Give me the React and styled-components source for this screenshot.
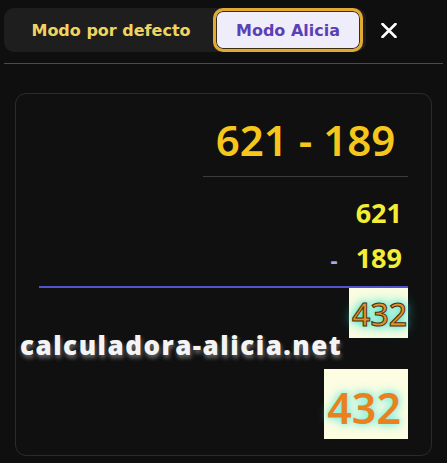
import React from "react";
import styled, { createGlobalStyle } from "styled-components";

const Global = createGlobalStyle`
  html, body { margin: 0; padding: 0; background: #0f0f0f; }
  body { font-family: "Noto Sans", sans-serif; }
`;

const Page = styled.div`
  width: 447px;
  height: 463px;
  background: #0f0f0f;
  padding-top: 8px;
  box-sizing: border-box;
  overflow: hidden;
`;

const Header = styled.div`
  display: flex;
  align-items: center;
  margin: 0 4px;
  height: 44px;
`;

const TabGroup = styled.div`
  display: flex;
  align-items: stretch;
  width: 362px;
  height: 44px;
  background: #1e1e1e;
  border-radius: 10px;
  padding-right: 3px;
  box-sizing: border-box;
`;

const Tab = styled.button`
  font-family: "DejaVu Sans", Verdana, sans-serif;
  font-weight: bold;
  font-size: 16px;
  border-radius: 10px;
  cursor: pointer;
  display: flex;
  align-items: center;
  justify-content: center;
  padding: 0;
  ${(p) =>
    p.$active
      ? `
    width: 150px;
    flex: none;
    background: #efedf9;
    color: #5b3fb5;
    border: 3px solid #e2aa33;
    box-shadow: inset 0 0 0 1px #3b2c12;
  `
      : `
    flex: 1;
    background: transparent;
    color: #f0d462;
    border: none;
    padding-left: 5px;
  `}
`;

const CloseButton = styled.button`
  background: transparent;
  border: none;
  padding: 0;
  margin-left: 14px;
  width: 17px;
  height: 17px;
  display: flex;
  align-items: center;
  justify-content: center;
  cursor: pointer;
`;

const Divider = styled.div`
  margin: 11px 4px 0 4px;
  height: 1px;
  background: #4c4c4c;
`;

const Card = styled.div`
  margin: 29px 0 0 15px;
  width: 417px;
  height: 363px;
  box-sizing: border-box;
  border: 1px solid #2b2b2b;
  border-radius: 11px;
  background: #101010;
  padding: 26px 23px 0 23px;
  display: flex;
  flex-direction: column;
  align-items: flex-end;
`;

const Title = styled.div`
  width: 205px;
  height: 40px;
  text-align: center;
  font-family: "Noto Sans", sans-serif;
  font-weight: 600;
  font-size: 42px;
  line-height: 40px;
  color: #f6c61c;
  padding-bottom: 16px;
  border-bottom: 1px solid #3c3c3c;
  white-space: nowrap;
`;

const Operands = styled.div`
  margin-top: 13px;
  width: 100%;
  display: flex;
  flex-direction: column;
  align-items: flex-end;
  padding-right: 6px;
  box-sizing: border-box;
`;

const OperandRow = styled.div`
  height: 45px;
  line-height: 45px;
  display: flex;
  align-items: baseline;
  font-family: "Noto Sans", sans-serif;
  font-weight: bold;
  font-size: 27px;
  color: #f3ee35;
`;

const Operator = styled.span`
  color: #a9a9f2;
  font-size: 22px;
  margin-right: 18px;
`;

const SumLine = styled.div`
  margin-top: 6px;
  width: 369px;
  height: 2px;
  background: #5454cf;
`;

const ResultBox = styled.div`
  background: #fdfde2;
  display: flex;
  align-items: center;
  justify-content: flex-end;
  box-sizing: border-box;
  font-family: "Noto Sans", sans-serif;
  font-weight: ${(p) => (p.$outlined ? 500 : 600)};
  width: ${(p) => p.$w}px;
  height: ${(p) => p.$h}px;
  font-size: ${(p) => p.$size}px;
  padding-right: ${(p) => p.$pr}px;
  padding-top: ${(p) => p.$pt}px;
  color: ${(p) => (p.$outlined ? "#e2902c" : "#e8821e")};
  -webkit-text-stroke: ${(p) => (p.$outlined ? "1px #4a3008" : "0")};
  text-shadow: ${(p) =>
    p.$outlined
      ? "0 0 6px #3fe0d0, 0 0 12px #3fe0d0, 0 0 18px rgba(63,224,208,0.6)"
      : "0 0 6px #7ff0e0, 0 0 12px rgba(90,230,215,0.8)"};
`;

const Watermark = styled.div`
  align-self: flex-start;
  margin-left: -19px;
  height: 31px;
  line-height: 14px;
  font-family: "Open Sans", sans-serif;
  font-weight: 800;
  font-size: 26px;
  letter-spacing: 1.5px;
  color: #f4f4f4;
  white-space: nowrap;
  text-shadow: 1px 3px 4px rgba(140, 140, 140, 0.75);
`;

export default function App() {
  return (
    <Page>
      <Global />
      <Header>
        <TabGroup>
          <Tab>Modo por defecto</Tab>
          <Tab $active>Modo Alicia</Tab>
        </TabGroup>
        <CloseButton aria-label="Cerrar">
          <svg width="16" height="15" viewBox="0 0 16 15">
            <path d="M1.5 1 L14.5 14 M14.5 1 L1.5 14" stroke="#ffffff" strokeWidth="2.6" strokeLinecap="round" />
          </svg>
        </CloseButton>
      </Header>
      <Divider />
      <Card>
        <Title>621 - 189</Title>
        <Operands>
          <OperandRow>621</OperandRow>
          <OperandRow>
            <Operator>-</Operator>189
          </OperandRow>
        </Operands>
        <SumLine />
        <ResultBox $w={59} $h={50} $size={32} $pr={1} $pt={0} $outlined>
          432
        </ResultBox>
        <Watermark>calculadora-alicia.net</Watermark>
        <ResultBox $w={84} $h={70} $size={43} $pr={7} $pt={6}>
          432
        </ResultBox>
      </Card>
    </Page>
  );
}
